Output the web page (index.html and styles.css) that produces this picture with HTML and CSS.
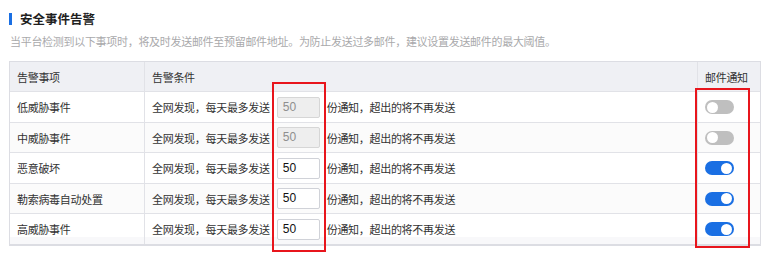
FILE: index.html
```html
<!DOCTYPE html>
<html lang="zh-CN">
<head>
<meta charset="utf-8">
<link rel="stylesheet" href="styles.css">
</head>
<body>
<div class="page">
  <h2 class="title">安全事件告警</h2>
  <p class="desc">当平台检测到以下事项时，将及时发送邮件至预留邮件地址。为防止发送过多邮件，建议设置发送邮件的最大阈值。</p>
  <div class="table">
    <div class="row head">
      <div class="c1">告警事项</div>
      <div class="c2">告警条件</div>
      <div class="c3">邮件通知</div>
    </div>
    <div class="row r-a">
      <div class="c1">低威胁事件</div>
      <div class="c2"><span>全网发现，每天最多发送</span><span class="num disabled">50</span><span>份通知，超出的将不再发送</span></div>
      <div class="c3"><span class="sw"></span></div>
    </div>
    <div class="row r-b alt">
      <div class="c1">中威胁事件</div>
      <div class="c2"><span>全网发现，每天最多发送</span><span class="num disabled">50</span><span>份通知，超出的将不再发送</span></div>
      <div class="c3"><span class="sw"></span></div>
    </div>
    <div class="row r-a">
      <div class="c1">恶意破坏</div>
      <div class="c2"><span>全网发现，每天最多发送</span><span class="num">50</span><span>份通知，超出的将不再发送</span></div>
      <div class="c3"><span class="sw on"></span></div>
    </div>
    <div class="row r-b alt">
      <div class="c1">勒索病毒自动处置</div>
      <div class="c2"><span>全网发现，每天最多发送</span><span class="num">50</span><span>份通知，超出的将不再发送</span></div>
      <div class="c3"><span class="sw on"></span></div>
    </div>
    <div class="row r-a last">
      <div class="c1">高威胁事件</div>
      <div class="c2"><span>全网发现，每天最多发送</span><span class="num">50</span><span>份通知，超出的将不再发送</span></div>
      <div class="c3"><span class="sw on"></span></div>
    </div>
  </div>
  <div class="mark mark-input"></div>
  <div class="mark mark-switch"></div>
</div>
</body>
</html>
```

FILE: styles.css
```css
* { box-sizing: border-box; }
html, body { margin: 0; padding: 0; background: #fff; }
body {
  font-family: "Noto Sans CJK SC", "Noto Sans", sans-serif;
  font-size: 11px;
  color: #333;
  width: 778px;
  height: 262px;
  overflow: hidden;
}
.page {
  position: relative;
  padding: 11px 0 0 9px;
}
.title {
  margin: 0;
  display: flex;
  align-items: center;
  height: 16px;
  font-size: 12.5px;
  font-weight: bold;
  color: #1f1f1f;
  line-height: 16px;
}
.title::before {
  content: "";
  width: 3px;
  height: 12px;
  background: #1a6fe3;
  margin-right: 8px;
}
.desc {
  margin: 7px 0 0 1px;
  height: 14px;
  line-height: 14px;
  color: #a9a9ab;
  font-size: 11px;
  letter-spacing: -0.3px;
}
.table {
  margin-top: 13px;
  width: 752px;
  border: 1px solid #dcdde3;
  border-bottom: 2px solid #dcdde3;
  letter-spacing: -0.3px;
}
.row {
  display: grid;
  grid-template-columns: 135px 553px 1fr;
  height: 31px;
  border-top: 1px solid #e1e2e7;
}
.row.r-b { height: 30px; }
.row.head {
  height: 29px;
  border-top: 0;
  background: #eff0f4;
}
.row.alt { background: #fbfbfb; }
.row.last { background: linear-gradient(#fff 0 23px, #f8f8fa 23px); }
.row > div {
  display: flex;
  align-items: center;
}
.c1 { padding-left: 7px; border-right: 1px solid #e1e2e7; }
.c2 { padding-left: 7px; border-right: 1px solid #e1e2e7; }
.c3 { padding-left: 7px; }
.head .c1, .head .c2, .head .c3 { padding-top: 1px; }
.num {
  width: 43px;
  height: 21px;
  margin: 0 7px 0 7px;
  border: 1px solid #d0d2d8;
  border-radius: 2px;
  background: #fff;
  color: #111;
  font-family: "Liberation Sans", Arial, sans-serif;
  font-size: 12px;
  letter-spacing: 0;
  line-height: 19px;
  padding-left: 5px;
}
.num.disabled {
  background: #eeeeee;
  color: #8f8f8f;
  border-color: #d6d6d6;
}
.sw {
  position: relative;
  display: block;
  width: 29px;
  height: 14px;
  border-radius: 7px;
  background: #bfbfbf;
}
.sw::after {
  content: "";
  position: absolute;
  top: 1.5px;
  left: 2px;
  width: 11px;
  height: 11px;
  border-radius: 50%;
  background: #fff;
}
.sw.on { background: #1a6fe3; }
.sw.on::after { left: auto; right: 2px; }
.mark {
  position: absolute;
  border: 2px solid #e8151c;
}
.mark-input { left: 272px; top: 82px; width: 54px; height: 170px; }
.mark-switch { left: 695px; top: 88px; width: 55px; height: 160px; }
```
